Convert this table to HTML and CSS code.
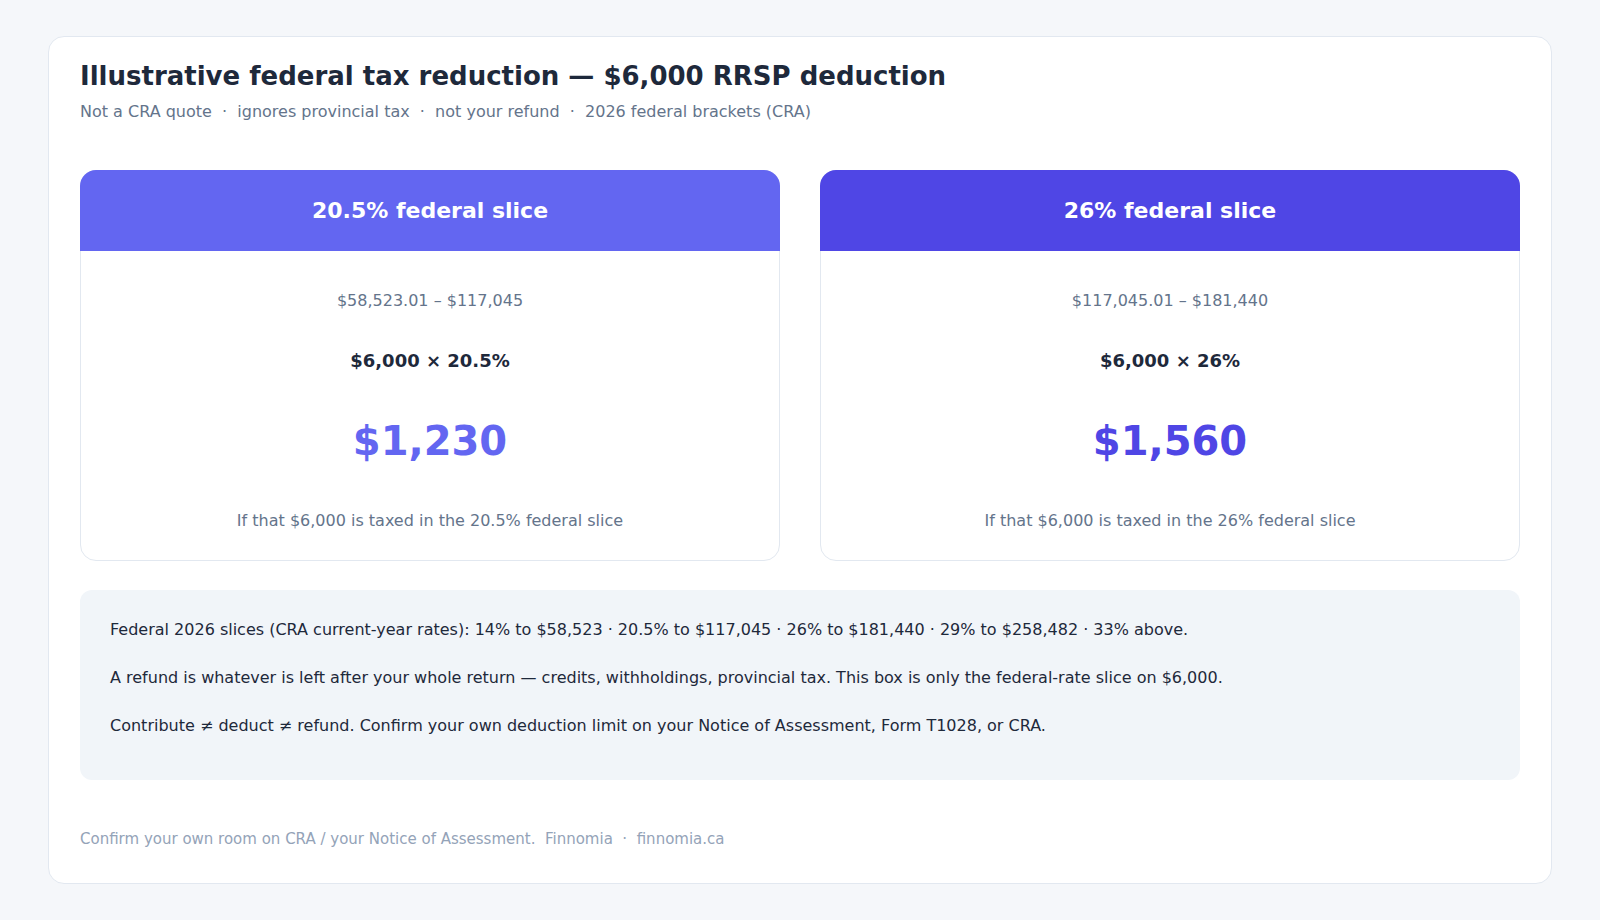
FILE: index.html
```html
<!DOCTYPE html>
<html lang="en">
<head>
<meta charset="utf-8">
<title>Illustrative federal tax reduction</title>
<link rel="stylesheet" href="styles.css">
</head>
<body>
<div class="panel">
  <h1 class="title">Illustrative federal tax reduction — $6,000 RRSP deduction</h1>
  <p class="subtitle">Not a CRA quote &nbsp;·&nbsp; ignores provincial tax &nbsp;·&nbsp; not your refund &nbsp;·&nbsp; 2026 federal brackets (CRA)</p>

  <div class="slices">
    <div class="slice slice-a">
      <div class="slice-head">20.5% federal slice</div>
      <div class="slice-body">
        <div class="range">$58,523.01 – $117,045</div>
        <div class="formula">$6,000 × 20.5%</div>
        <div class="amount">$1,230</div>
        <div class="note">If that $6,000 is taxed in the 20.5% federal slice</div>
      </div>
    </div>
    <div class="slice slice-b">
      <div class="slice-head">26% federal slice</div>
      <div class="slice-body">
        <div class="range">$117,045.01 – $181,440</div>
        <div class="formula">$6,000 × 26%</div>
        <div class="amount">$1,560</div>
        <div class="note">If that $6,000 is taxed in the 26% federal slice</div>
      </div>
    </div>
  </div>

  <div class="info">
    <p>Federal 2026 slices (CRA current-year rates): 14% to $58,523 · 20.5% to $117,045 · 26% to $181,440 · 29% to $258,482 · 33% above.</p>
    <p>A refund is whatever is left after your whole return — credits, withholdings, provincial tax. This box is only the federal-rate slice on $6,000.</p>
    <p>Contribute ≠ deduct ≠ refund. Confirm your own deduction limit on your Notice of Assessment, Form T1028, or CRA.</p>
  </div>

  <p class="footer">Confirm your own room on CRA / your Notice of Assessment.&nbsp; Finnomia &nbsp;·&nbsp; finnomia.ca</p>
</div>
</body>
</html>
```

FILE: styles.css
```css
* { box-sizing: border-box; }

html, body {
  margin: 0;
  padding: 0;
}

body {
  background: #f5f7fa;
  padding: 36px 48px;
  font-family: "DejaVu Sans", "Liberation Sans", sans-serif;
  color: #1e293b;
}

.panel {
  background: #ffffff;
  border: 1px solid #e2e8f0;
  border-radius: 16px;
  height: 848px;
  padding: 22px 31px 0;
}

.title {
  margin: 0;
  font-size: 26px;
  line-height: 34px;
  font-weight: bold;
  color: #1e293b;
}

.subtitle {
  margin: 9px 0 0;
  font-size: 16px;
  line-height: 20px;
  color: #64748b;
}

.slices {
  display: grid;
  grid-template-columns: 1fr 1fr;
  gap: 40px;
  margin-top: 48px;
}

.slice {
  border: 1px solid #e2e8f0;
  border-radius: 16px;
  height: 391px;
  display: flex;
  flex-direction: column;
}

.slice-head {
  margin: -1px -1px 0;
  height: 81px;
  border-radius: 16px 16px 0 0;
  display: flex;
  align-items: center;
  justify-content: center;
  color: #ffffff;
  font-size: 22px;
  font-weight: bold;
}

.slice-a .slice-head { background: #6366f1; }
.slice-b .slice-head { background: #4f46e5; }
.slice-a .amount { color: #6366f1; }
.slice-b .amount { color: #4f46e5; }

.slice-body {
  display: flex;
  flex-direction: column;
  align-items: center;
  padding-top: 38px;
  text-align: center;
}

.range {
  font-size: 16px;
  line-height: 24px;
  color: #64748b;
}

.formula {
  margin-top: 36px;
  font-size: 18px;
  line-height: 24px;
  font-weight: bold;
  color: #1e293b;
}

.amount {
  margin-top: 44px;
  font-size: 40px;
  line-height: 48px;
  font-weight: bold;
}

.note {
  margin-top: 44px;
  font-size: 16px;
  line-height: 24px;
  color: #64748b;
}

.info {
  margin-top: 29px;
  height: 190px;
  background: #f1f5f9;
  border-radius: 12px;
  padding: 28px 30px;
}

.info p {
  margin: 0 0 24px;
  font-size: 16px;
  line-height: 24px;
  color: #1e293b;
}

.footer {
  margin: 49px 0 0;
  font-size: 15px;
  line-height: 20px;
  color: #94a3b8;
}
```
